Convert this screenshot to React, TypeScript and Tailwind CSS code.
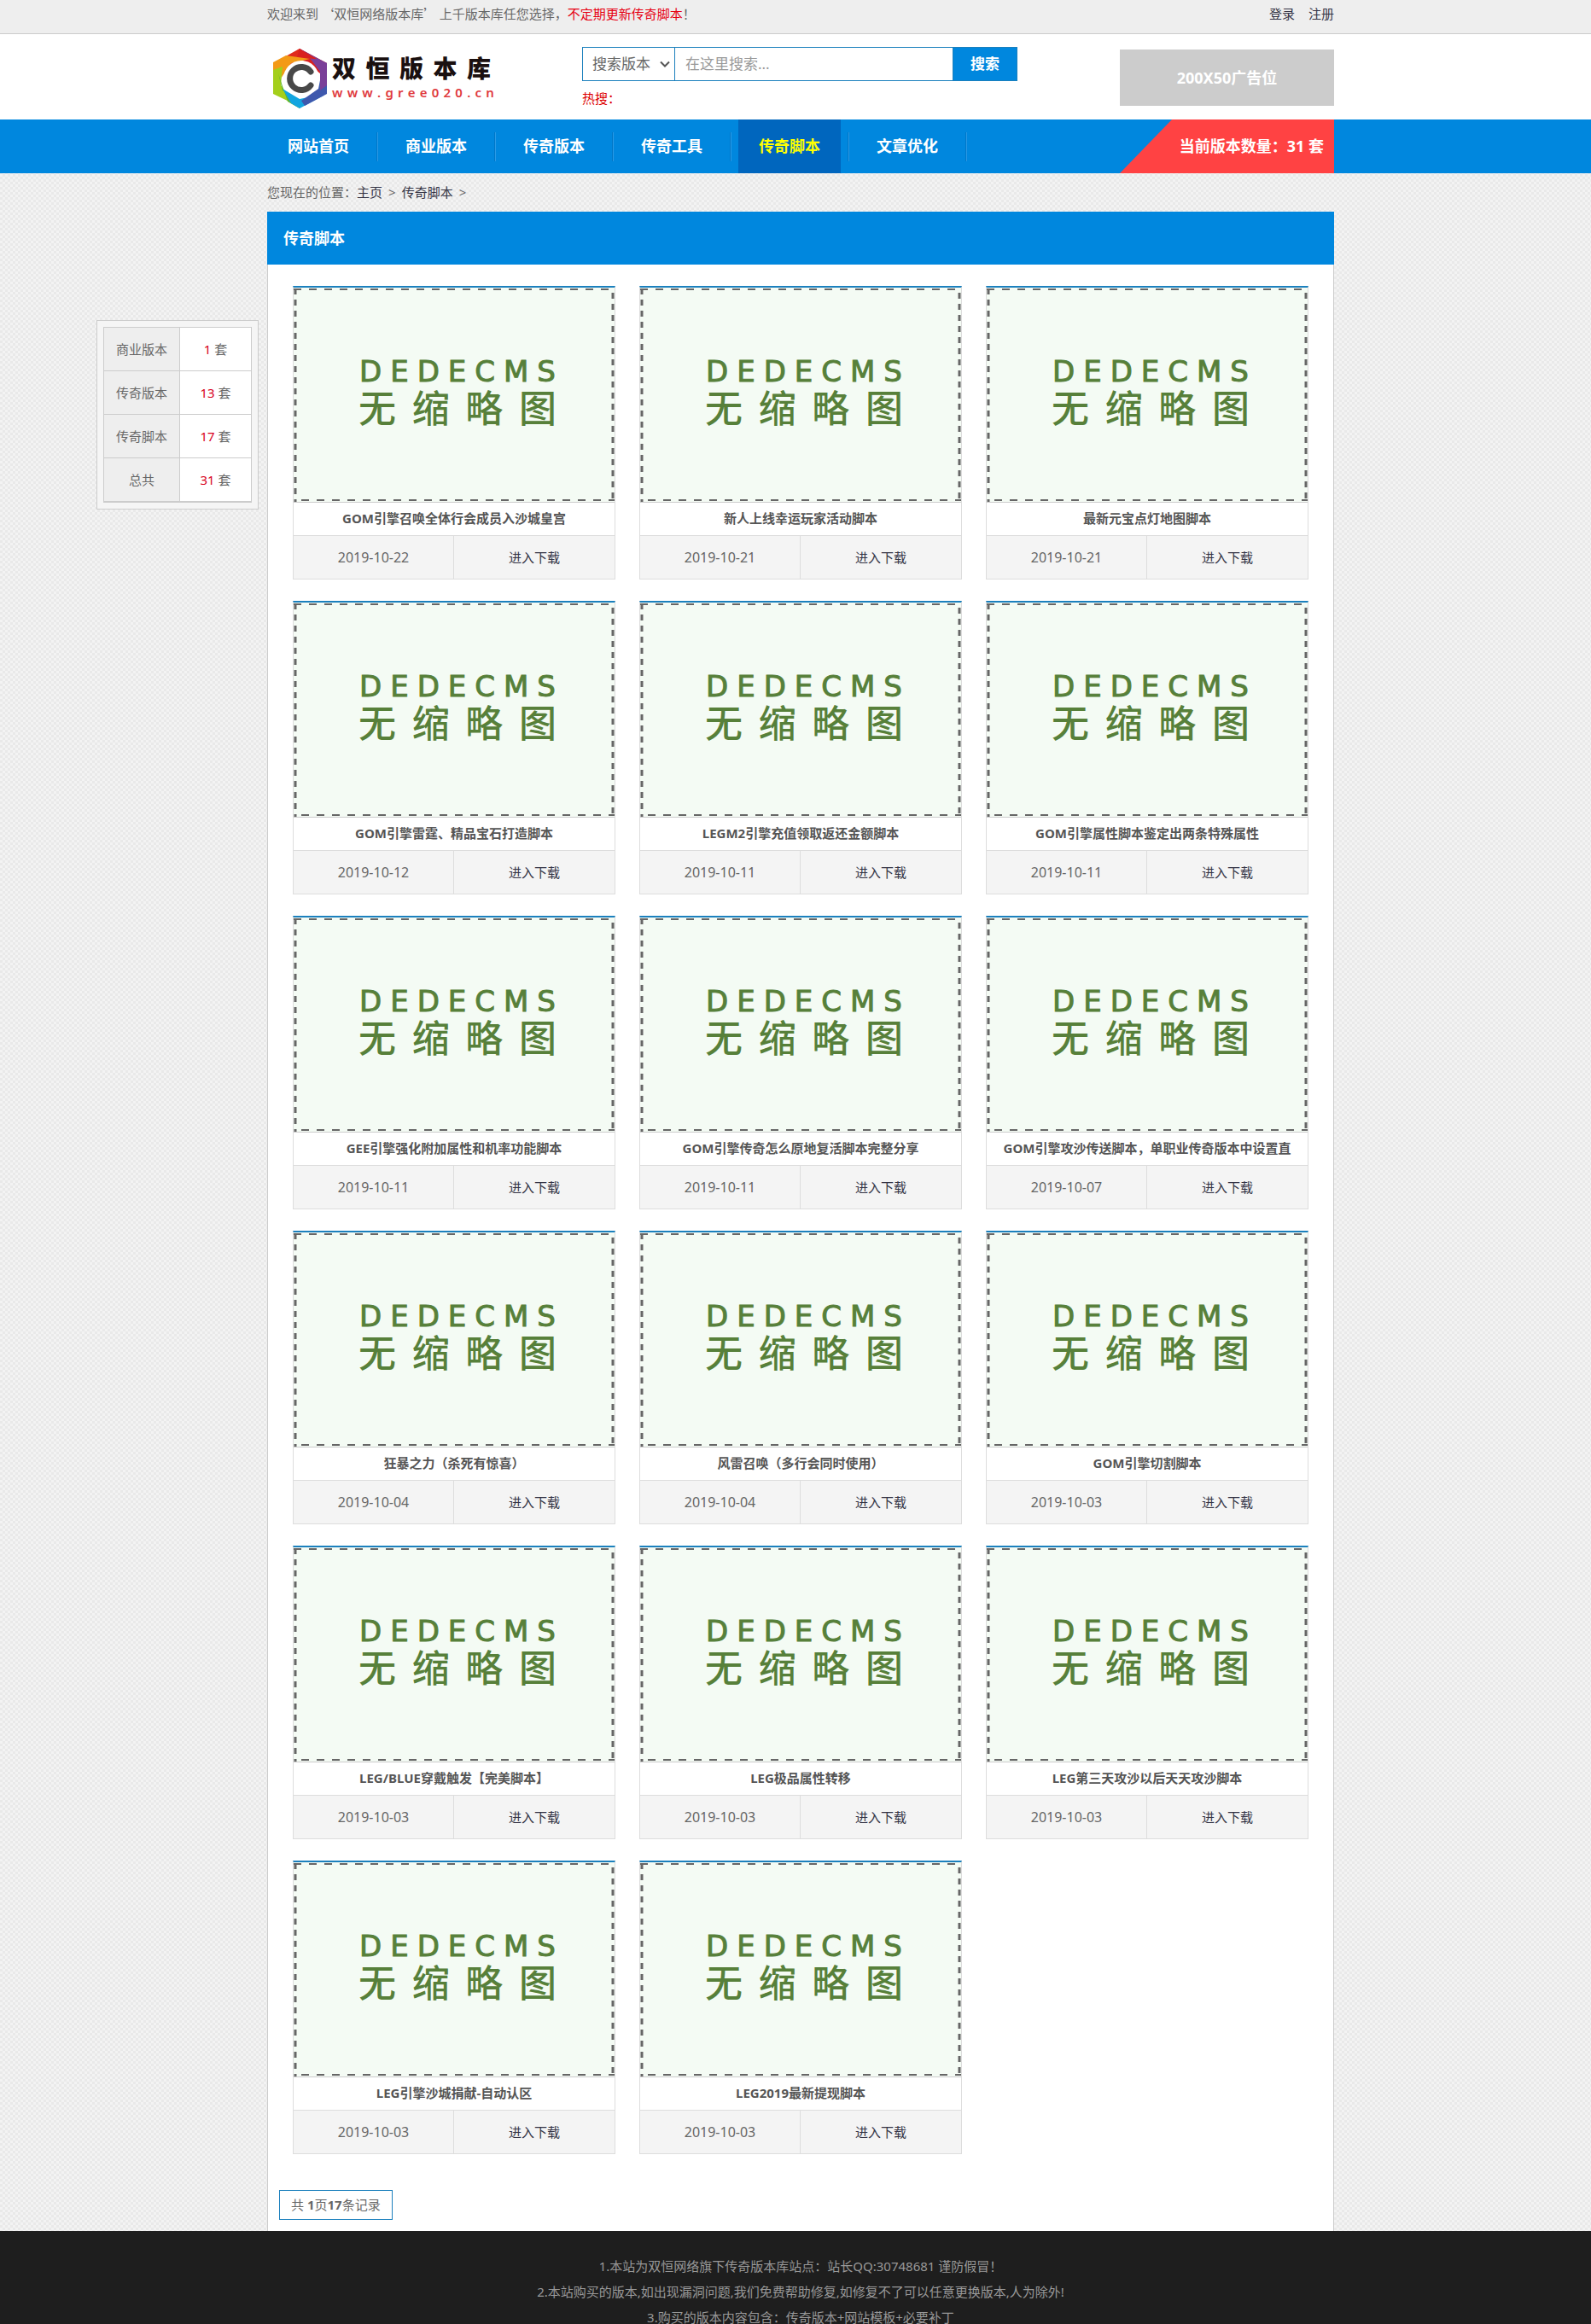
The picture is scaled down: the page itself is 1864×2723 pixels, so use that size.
import { useState } from 'react'

interface Script {
  title: string
  date: string
}

const navItems = ['网站首页', '商业版本', '传奇版本', '传奇工具', '传奇脚本', '文章优化']

const stats = [
  { label: '商业版本', count: 1 },
  { label: '传奇版本', count: 13 },
  { label: '传奇脚本', count: 17 },
  { label: '总共', count: 31 },
]

const scripts: Script[] = [
  { title: 'GOM引擎召唤全体行会成员入沙城皇宫', date: '2019-10-22' },
  { title: '新人上线幸运玩家活动脚本', date: '2019-10-21' },
  { title: '最新元宝点灯地图脚本', date: '2019-10-21' },
  { title: 'GOM引擎雷霆、精品宝石打造脚本', date: '2019-10-12' },
  { title: 'LEGM2引擎充值领取返还金额脚本', date: '2019-10-11' },
  { title: 'GOM引擎属性脚本鉴定出两条特殊属性', date: '2019-10-11' },
  { title: 'GEE引擎强化附加属性和机率功能脚本', date: '2019-10-11' },
  { title: 'GOM引擎传奇怎么原地复活脚本完整分享', date: '2019-10-11' },
  { title: 'GOM引擎攻沙传送脚本，单职业传奇版本中设置直', date: '2019-10-07' },
  { title: '狂暴之力（杀死有惊喜）', date: '2019-10-04' },
  { title: '风雷召唤（多行会同时使用）', date: '2019-10-04' },
  { title: 'GOM引擎切割脚本', date: '2019-10-03' },
  { title: 'LEG/BLUE穿戴触发【完美脚本】', date: '2019-10-03' },
  { title: 'LEG极品属性转移', date: '2019-10-03' },
  { title: 'LEG第三天攻沙以后天天攻沙脚本', date: '2019-10-03' },
  { title: 'LEG引擎沙城捐献-自动认区', date: '2019-10-03' },
  { title: 'LEG2019最新提现脚本', date: '2019-10-03' },
]

function Spread({ text, className }: { text: string; className: string }) {
  return (
    <span className={`flex justify-between ${className}`}>
      {text.split('').map((c, i) => (
        <span key={i}>{c}</span>
      ))}
    </span>
  )
}

function Logo() {
  return (
    <a href="#" className="flex items-center gap-1 pl-1">
      <svg width="68" height="72" viewBox="0 0 68 72" aria-hidden="true">
        <path d="M34 1 L66 18 L58 30 L34 12 L12 16 Z" fill="#d9201f" />
        <path d="M34 1 L66 18 L66 38 L56 22 Z" fill="#7a3f98" />
        <path d="M34 1 L3 18 L14 24 L44 12 Z" fill="#e02a1c" />
        <path d="M34 1 L54 13 L30 14 Z" fill="#d9201f" />
        <path d="M3 17 L18 9 L46 13 L24 18 L8 42 L3 40 Z" fill="#f39a16" />
        <path d="M3 26 L14 22 L12 44 L28 66 L3 54 Z" fill="#a4cf1b" />
        <path d="M9 30 L14 50 L36 62 L34 71 L20 63 Z" fill="#5fb52e" />
        <path d="M14 48 L34 60 L54 56 L62 56 L34 71 L24 65 Z" fill="#12a5e0" />
        <path d="M36 62 L56 48 L60 28 L66 40 L66 54 L40 68 Z" fill="#3e58ad" />
        <path d="M46 12 L66 18 L66 44 L58 50 L58 28 Z" fill="#7a3f98" />
        <circle cx="36" cy="36" r="21" fill="#fff" />
        <path d="M47 28 A13.500 13.500 0 1 0 47 44" fill="none" stroke="#484848" strokeWidth="7" strokeLinecap="round" />
      </svg>
      <span className="flex flex-col w-[190px]">
        <Spread text="双恒版本库" className="w-[186px] text-[28px] leading-8 font-black text-[#1a1010]" />
        <Spread text="www.gree020.cn" className="text-[15px] leading-6 font-semibold text-[#e0393d]" />
      </span>
    </a>
  )
}

// Placeholder picture for entries without a thumbnail
function Thumb() {
  return (
    <div className="relative h-[251px] bg-[#f4fbf4] flex flex-col items-center pt-[78px] pl-2 text-[#57803a]">
      <svg className="absolute inset-0 w-full h-full" aria-hidden="true">
        <g stroke="#666">
          <line x1="0" y1="2" x2="100%" y2="2" strokeWidth="2" strokeDasharray="9 9" />
          <line x1="9" y1="249" x2="100%" y2="249" strokeWidth="2" strokeDasharray="9 9" />
          <line x1="2" y1="1" x2="2" y2="100%" strokeWidth="3" strokeDasharray="7 6" />
          <line x1="374" y1="6" x2="374" y2="100%" strokeWidth="3" strokeDasharray="7 6" />
        </g>
      </svg>
      <Spread
        text="DEDECMS"
        className="w-[230px] font-['DejaVu_Sans'] text-[34px] leading-[40px] [-webkit-text-stroke:1px_#57803a]"
      />
      <Spread
        text="无缩略图"
        className="w-[232px] font-['Liberation_Sans','Noto_Sans_CJK_SC',sans-serif] text-[44px] leading-[50px] font-medium"
      />
    </div>
  )
}

function Card({ item }: { item: Script }) {
  return (
    <div className="border border-[#ddd] border-t-2 border-t-[#1b80bd]">
      <Thumb />
      <h3 className="h-[39px] leading-[36px] border-t border-[#ccc] text-center font-bold text-[#555] whitespace-nowrap overflow-hidden">
        {item.title}
      </h3>
      <div className="grid grid-cols-2 h-[51px] leading-[50px] border-t border-[#ddd] bg-[#f4f4f4] text-center">
        <span className="border-r border-[#ddd] text-base leading-[50px]">{item.date}</span>
        <a href="#" className="text-[#334]">进入下载</a>
      </div>
    </div>
  )
}

export default function App() {
  const [keyword, setKeyword] = useState('')

  return (
    <div className="relative font-['Noto_Sans','Noto_Sans_CJK_SC',sans-serif] text-[15px] leading-5 text-[#666] bg-[#eee] bg-[repeating-conic-gradient(#e9e9e9_0_25%,#f3f3f3_0_50%)] bg-[length:6px_6px]">
      {/* Top bar */}
      <div className="h-10 pl-3 bg-[#eee] border-b border-[#ccc]">
        <div className="max-w-[1250px] mx-auto flex justify-between pt-[6px]">
          <p className="font-['Noto_Sans_CJK_SC',sans-serif]">
            欢迎来到 ‘双恒网络版本库’ 上千版本库任您选择，<span className="text-[#e60012]">不定期更新传奇脚本</span>！
          </p>
          <div className="flex gap-4 text-[#334]">
            <a href="#">登录</a>
            <a href="#">注册</a>
          </div>
        </div>
      </div>

      {/* Header */}
      <header className="pl-3 bg-white">
        <div className="max-w-[1250px] mx-auto h-[100px] flex items-start">
          <div className="w-[369px] pt-4">
            <Logo />
          </div>
          <div className="pt-[15px]">
            <form className="flex h-10 text-[17px]" onSubmit={e => e.preventDefault()}>
              <div className="relative">
                <select
                  aria-label="搜索类型"
                  className="appearance-none w-[109px] h-full pl-[11px] border border-[#1b80bd] bg-white outline-none"
                >
                  <option>搜索版本</option>
                </select>
                <svg className="absolute right-[6px] top-[16px] pointer-events-none" width="12" height="9" viewBox="0 0 12 9" fill="none" stroke="#555" strokeWidth="2">
                  <path d="M1 1.500 L6 6.500 L11 1.500" />
                </svg>
              </div>
              <input
                type="text"
                aria-label="搜索"
                value={keyword}
                onChange={e => setKeyword(e.target.value)}
                placeholder="在这里搜索..."
                className="w-[325px] px-3 border-y border-[#1b80bd] outline-none placeholder:text-[#999]"
              />
              <button type="submit" className="w-[76px] bg-[#0087de] border border-[#1b80bd] text-white font-bold">
                搜索
              </button>
            </form>
            <p className="mt-[10px] text-[#d00]">热搜：</p>
          </div>
          <div className="ml-auto mt-[18px] w-[251px] h-[66px] flex items-center justify-center bg-[#ccc] text-white text-lg font-bold">
            200X50广告位
          </div>
        </div>
      </header>

      {/* Nav */}
      <nav className="pl-3 bg-[#0087de] text-white text-lg font-bold">
        <div className="max-w-[1250px] mx-auto h-[63px] flex items-center">
          {navItems.map(item => (
            <div key={item} className="flex items-center">
              <a
                href="#"
                className={`w-[120px] h-[63px] leading-[63px] text-center ${item === '传奇脚本' ? 'bg-[#0066be] text-[#ff0]' : ''}`}
              >
                {item}
              </a>
              <i className="mx-2 h-[34px] w-px bg-[#0076c6] border-r border-[#2a9ae6] box-content" />
            </div>
          ))}
          <div className="ml-auto w-[251px] h-[63px] leading-[63px] pr-3 text-right bg-[#ff4243] [clip-path:polygon(61px_0,100%_0,100%_100%,0_100%)]">
            当前版本数量：31 套
          </div>
        </div>
      </nav>

      {/* Floating counters */}
      <aside className="absolute left-[calc(50%-819px)] top-[375px] w-[190px] p-[7px] border border-[#ccc] bg-[#f5f5f5]">
        <table className="w-full border-collapse border border-b-2 border-[#ccc] bg-white text-center">
          <tbody>
            {stats.map(s => (
              <tr key={s.label} className="h-[51px] border-b border-[#ccc]">
                <th scope="row" className="w-[89px] border-r border-[#ccc] bg-[#eee] font-normal text-center">{s.label}</th>
                <td><span className="text-[#d8001b]">{s.count}</span> 套</td>
              </tr>
            ))}
          </tbody>
        </table>
      </aside>

      <main className="pl-3">
        <div className="max-w-[1250px] mx-auto">
          <div className="flex gap-[7px] h-[45px] leading-[44px]">
            <span>您现在的位置：<a href="#" className="text-[#334]">主页</a></span>
            <span>&gt;</span>
            <a href="#" className="text-[#334]">传奇脚本</a>
            <span>&gt;</span>
          </div>
          <h2 className="h-[62px] leading-[62px] pl-[19px] bg-[#0087de] text-white text-lg font-bold">传奇脚本</h2>
          <div className="bg-white border-x border-[#ccc] pt-[25px] pb-[13px]">
            <div className="grid grid-cols-3 gap-x-7 gap-y-[25px] px-[29px]">
              {scripts.map(s => (
                <Card key={s.title} item={s} />
              ))}
            </div>
            <div className="mt-[42px] ml-[13px] inline-block border border-[#1b80bd] px-[13px] leading-[33px] align-top">
              共 <strong>1</strong>页<strong>17</strong>条记录
            </div>
          </div>
        </div>
      </main>

      <footer className="pl-3 bg-[#1e1e1e] text-[#999] text-center pt-[33px] flex flex-col gap-[14px] leading-4">
        <p>1.本站为双恒网络旗下传奇版本库站点：站长QQ:30748681 谨防假冒！</p>
        <p>2.本站购买的版本,如出现漏洞问题,我们免费帮助修复,如修复不了可以任意更换版本,人为除外!</p>
        <p>3.购买的版本内容包含：传奇版本+网站模板+必要补丁</p>
      </footer>
    </div>
  )
}
